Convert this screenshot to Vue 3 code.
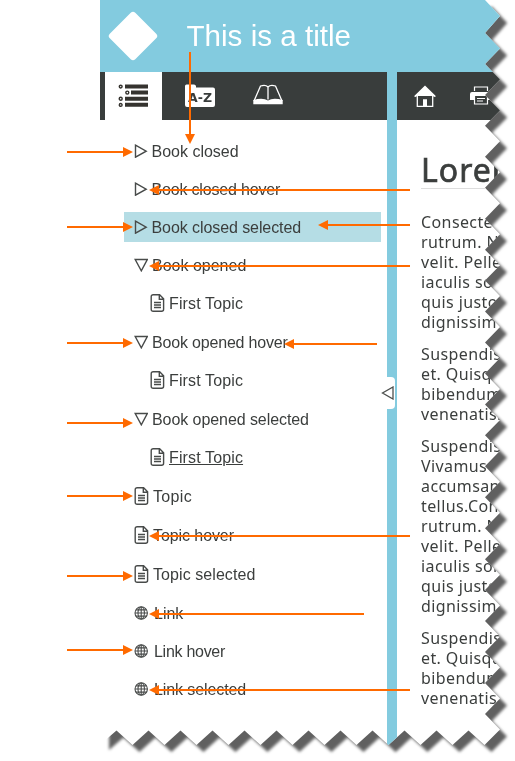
<script setup>
const rows = [
  { kind: 'closed', label: 'Book closed', tracking: 0 },
  { kind: 'closed', label: 'Book closed hover', tracking: -0.18 },
  { kind: 'closed', label: 'Book closed selected', selected: true, tracking: -0.08 },
  { kind: 'opened', label: 'Book opened', tracking: 0 },
  { kind: 'topic', label: 'First Topic', nested: true, tracking: 0.13 },
  { kind: 'opened', label: 'Book opened hover', tracking: -0.18 },
  { kind: 'topic', label: 'First Topic', nested: true, tracking: 0.13 },
  { kind: 'opened', label: 'Book opened selected', tracking: -0.07 },
  { kind: 'topic', label: 'First Topic', nested: true, underlined: true, tracking: 0.13 },
  { kind: 'topic', label: 'Topic', tracking: 0.35 },
  { kind: 'topic', label: 'Topic hover', tracking: -0.08 },
  { kind: 'topic', label: 'Topic selected', tracking: 0.07 },
  { kind: 'link', label: 'Link', tracking: 0 },
  { kind: 'link', label: 'Link hover', tracking: -0.28 },
  { kind: 'link', label: 'Link selected', tracking: -0.1 },
]

const paragraphs = [
  ['Consectet', 'rutrum. Nu', 'velit. Pelle', 'iaculis soll', 'quis justo', 'dignissim'],
  ['Suspendis', 'et. Quisqu', 'bibendum', 'venenatis.'],
  ['Suspendis', 'Vivamus', 'accumsan', 'tellus.Con', 'rutrum. Nu', 'velit. Pelle', 'iaculis soll', 'quis justo', 'dignissim'],
  ['Suspendis', 'et. Quisqu', 'bibendum', 'venenatis.'],
]

// Callout arrows: y, tail x, tip x
const arrows = [
  [152, 67, 133], [227, 67, 133], [343, 67, 133], [423, 67, 133],
  [496, 67, 133], [576, 67, 133], [650, 67, 133],
  [190, 410, 149], [225, 410, 318], [266, 410, 149], [344, 377, 284],
  [536, 410, 149], [614, 364, 149], [690, 410, 149],
].map(([y, from, to]) => {
  const base = to + (from < to ? -10 : 10)
  return { line: `M${from} ${y}H${base}`, head: `M${to} ${y}L${base} ${y - 5}V${y + 5}Z` }
})

// Torn-paper outline, relative to the sheet's left edge
const pts = ['0px 0px', '385px 0px', '400px 16px']
for (let i = 0; i < 23; i++) {
  const y = 33 + i * 30.95
  pts.push(`385px ${y}px`, `400px ${y + 15.5}px`)
}
for (let x = 384.5; x > 10; x -= 32) pts.push(`${x}px 745px`, `${x - 16}px 730.5px`)
pts.push('2px 743px', '2px 700px', '0px 700px')
const outline = { clipPath: `polygon(${pts.join(',')})` }
</script>

<template>
  <div class="stage">
    <div class="shadow">
      <div class="sheet" :style="outline">
        <header class="header">
          <svg class="logo" width="52" height="52" viewBox="0 0 52 52"><rect x="8" y="8" width="36" height="36" rx="3.2" transform="rotate(45 26 26)" fill="#fff" /></svg>
          <h1 class="title">This is a title</h1>
        </header>
        <div class="columns">
          <aside class="side">
            <nav class="tabs">
              <div class="tab active">
                <svg width="31" height="24" viewBox="0 0 31 24">
                  <path d="M7 .5H30V4.500H7ZM13 6.500H30V10.500H13ZM7 12.700H30V16.700H7ZM7 18.700H30V22.700H7Z" fill="#35332f" />
                  <g fill="none" stroke="#35332f" stroke-width="1.4"><circle cx="2.7" cy="2.600" r="1.400" /><circle cx="9.300" cy="8.600" r="1.500" /><circle cx="2.700" cy="14.800" r="1.500" /><circle cx="2.700" cy="20.900" r="1.400" /></g>
                </svg>
              </div>
              <div class="tab az">
                <svg width="30" height="24" viewBox="0 0 30 24">
                  <path d="M0 2Q0 .5 1.5 .5H9Q10.5 .5 11 2V3.5H28Q30 3.5 30 5.5V21Q30 23 28 23H2Q0 23 0 21Z" fill="#fff" />
                  <text x="15" y="18" text-anchor="middle" textLength="24" lengthAdjust="spacingAndGlyphs" class="az-text">A-Z</text>
                </svg>
              </div>
              <div class="tab">
                <svg width="30" height="21" viewBox="0 0 30 21">
                  <path d="M1 17L7.5 2Q12.500 .2 15 3Q17.500 .2 22.500 2L29 17M15 3V15.500" fill="none" stroke="#fff" stroke-width="1.300" />
                  <path d="M.3 16Q10 13.500 15 16.500Q20 13.500 29.700 16V20.300H.3Z" fill="#fff" />
                </svg>
              </div>
            </nav>
            <ul class="tree">
              <li v-for="(r, i) in rows" :key="i" class="row" :class="[r.kind, { nested: r.nested, selected: r.selected }]">
                <div class="entry">
                  <svg v-if="r.kind === 'closed'" class="icon" width="14" height="14" viewBox="0 0 14 14"><path d="M1.500 1.200L12.200 7.200L1.500 13.200Z" /></svg>
                  <svg v-else-if="r.kind === 'opened'" class="icon" width="14" height="14" viewBox="0 0 14 14"><path d="M1.200 1.500H13.300L7.300 12.800Z" /></svg>
                  <svg v-else-if="r.kind === 'topic'" class="icon" width="15" height="18" viewBox="0 0 15 18"><path d="M3.200 .8H9.600L13.600 4.800V15.200Q13.600 17.200 11.600 17.200H3.200Q1.200 17.200 1.200 15.200V2.800Q1.200 .8 3.200 .8ZM9.300 1V5.200H13.300M4 8.500H11M4 11H11M4 13.500H11" /></svg>
                  <svg v-else class="icon globe" width="14" height="14" viewBox="0 0 14 14"><circle cx="7.200" cy="7" r="6.200" /><path d="M7.200 1V13M1 7H13.400M2 3.900H12.400M2 10.100H12.400" /><ellipse cx="7.200" cy="7" rx="3.200" ry="6" /></svg>
                  <span class="label" :class="{ underlined: r.underlined }" :style="{ letterSpacing: r.tracking + 'px' }">{{ r.label }}</span>
                </div>
              </li>
            </ul>
          </aside>
          <div class="splitter">
            <div class="handle">
              <svg width="13" height="14" viewBox="0 0 13 14"><path d="M12 1V13L1.500 7Z" fill="none" stroke="#4d504e" stroke-width="1.300" /></svg>
            </div>
          </div>
          <main class="main">
            <nav class="tools">
              <svg width="22" height="23" viewBox="0 0 22 23">
                <path d="M0 11.300L11 .5L22 11.300L20.500 12L18.800 11H3.200L1.500 12Z" fill="#fff" />
                <path d="M3.300 10V21.300H18.700V10" fill="none" stroke="#fff" stroke-width="1.300" />
                <path d="M9 21.500V14.300H13V21.500Z" fill="#fff" />
              </svg>
              <svg width="22" height="20" viewBox="0 0 22 20">
                <path d="M4.500 5V1H17.500V5" fill="none" stroke="#fff" stroke-width="1.200" />
                <path d="M2 6H20Q22 6 22 8V14H18V10H4V14H0V8Q0 6 2 6Z" fill="#fff" />
                <path d="M4.500 10V18H17.500V10M7 12.500H15M7 15H13" fill="none" stroke="#fff" stroke-width="1.200" />
              </svg>
            </nav>
            <article class="article">
              <h2 class="heading">Lorem</h2>
              <p v-for="(p, i) in paragraphs" :key="i" class="para">
                <span v-for="(l, j) in p" :key="j" class="line">{{ l }}</span>
              </p>
            </article>
          </main>
        </div>
      </div>
    </div>
    <svg class="arrows" width="515" height="761" viewBox="0 0 515 761">
      <g v-for="(a, i) in arrows" :key="i">
        <path :d="a.line" stroke="#ff6a00" stroke-width="2" />
        <path :d="a.head" fill="#ff6a00" />
      </g>
      <path d="M190 52V134" stroke="#ff6a00" stroke-width="2" />
      <path d="M185 134H195L190 144Z" fill="#ff6a00" />
    </svg>
  </div>
</template>

<style>
body { background: #fff; }
</style>

<style scoped>
.stage { position: relative; width: 515px; height: 761px; overflow: hidden; background: #fff; font-family: "Liberation Sans", Arial, sans-serif; color: #3b3e3d; }
.shadow { margin-left: 100px; width: 400px; height: 745px; filter: drop-shadow(7.5px 7.5px 1.5px #606060); }
.sheet { width: 400px; height: 745px; background: #fff; overflow: hidden; display: flex; flex-direction: column; }
.header { height: 72px; flex: none; background: #83cbdf; display: flex; align-items: center; padding-left: 7px; }
.logo { flex: none; margin-top: -1px; }
.title { margin: 0 0 0 27.500px; font-size: 29.600px; font-weight: 400; line-height: 34px; color: #fff; white-space: nowrap; }
.columns { flex: 1; display: flex; min-height: 0; }
.side { width: 287px; flex: none; }
.tabs { height: 48px; background: #393d3c; display: flex; padding-left: 5px; }
.tab { width: 57px; height: 48px; display: flex; align-items: center; justify-content: center; }
.tab + .tab { width: 68px; }
.tab.active { background: #fff; }
.tab.active svg { margin-left: -1px; }
.tab.az { margin-left: 4px; }
.tab:last-child svg { margin-top: -3px; }
.az-text { font: 700 12px "DejaVu Sans", sans-serif; fill: #393d3c; }
.tree { list-style: none; margin: 0; padding: 16px 6px 0 24px; }
.row { height: 38px; }
.row.topic { height: 39px; }
.entry { height: 30px; display: flex; align-items: center; padding-left: 10px; }
.nested .entry { padding-left: 26px; }
.selected .entry { background: #b5dde5; }
.icon { flex: none; fill: none; stroke: #484b4a; stroke-width: 1.400; margin-right: 3.500px; }
.opened .icon { margin-right: 4px; }
.topic .icon { margin-right: 4px; }
.link .icon { margin-right: 6px; }
.icon.globe { stroke-width: 1.100; }
.label { font-size: 16px; line-height: 20px; padding-top: 2px; white-space: nowrap; }
.underlined { text-decoration: underline; }
.splitter { width: 10px; flex: none; background: #83cbdf; padding-top: 305px; }
.handle { width: 14px; height: 32px; margin-left: -6px; display: flex; align-items: center; background: #fff; border-radius: 0 4px 4px 0; }
.main { flex: 1; min-width: 0; }
.tools { height: 48px; background: #393d3c; display: flex; align-items: center; gap: 34px; padding-left: 17px; }
.tools svg { flex: none; }
.article { padding-left: 24px; font-family: "Noto Sans", "Open Sans", sans-serif; }
.heading { margin: 29px 0 23px; height: 39px; line-height: 41px; font-size: 32px; font-weight: 400; -webkit-text-stroke: .7px #3b3e3d; letter-spacing: 1px; border-bottom: 1px solid #ddd; white-space: nowrap; }
.para { margin: 0 0 12px; font-size: 16px; line-height: 20px; letter-spacing: .4px; }
.line { display: block; white-space: nowrap; }
.arrows { position: absolute; left: 0; top: 0; }
</style>
